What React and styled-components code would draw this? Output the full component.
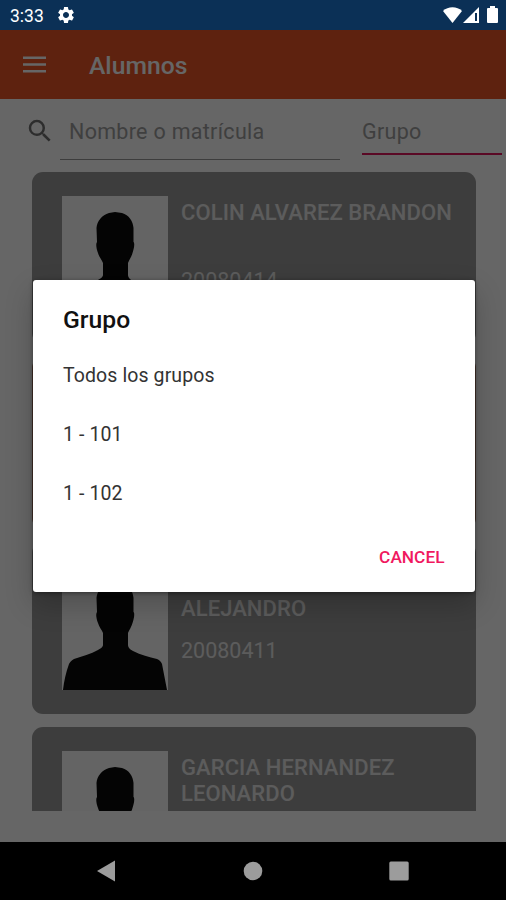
import styled, { createGlobalStyle } from "styled-components";
import { MdSettings, MdSearch } from "react-icons/md";

const GlobalStyle = createGlobalStyle`
    * {
        box-sizing: border-box;
    }

    body {
        margin: 0;
        font-family: 'Roboto', sans-serif;
    }
`;

const Phone = styled.div`
    position: relative;
    display: flex;
    flex-direction: column;
    width: 506px;
    height: 900px;
    overflow: hidden;
    background: #ffffff;
`;

const StatusBar = styled.div`
    display: flex;
    align-items: center;
    flex: none;
    height: 30px;
    padding: 0 7px 0 10px;
    background: #0b3056;
    color: #ffffff;
`;

const Clock = styled.span`
    width: 46px;
    padding-top: 2px;
    font-size: 17.5px;
    line-height: 20px;
`;

const StatusIcons = styled.div`
    display: flex;
    align-items: center;
    margin-left: auto;
`;

const AppBar = styled.header`
    display: flex;
    align-items: center;
    flex: none;
    height: 69px;
    padding: 0 20px;
    background: #eb5526;
    color: #ffffff;
`;

const MenuButton = styled.button`
    display: flex;
    width: 69px;
    padding: 0;
    border: 0;
    background: none;
    color: #ffffff;
`;

const Title = styled.h1`
    margin: 3px 0 0;
    font-size: 24.7px;
    font-weight: 500;
    line-height: 30px;
`;

const Filters = styled.div`
    display: flex;
    align-items: flex-start;
    flex: none;
    height: 73px;
    padding: 17px 4px 0 25px;
`;

const SearchIcon = styled.div`
    display: flex;
    width: 35px;
    color: #707070;
`;

const Field = styled.div`
    width: ${({ $width }) => $width}px;
    height: ${({ $height }) => $height}px;
    margin-right: ${({ $gap }) => $gap || 0}px;
    padding-left: ${({ $indent }) => $indent || 0}px;
    border-bottom: ${({ $line }) => $line};
    color: #9e9e9e;
    font-size: 21.5px;
    line-height: 32px;
    letter-spacing: 0.3px;
`;

const List = styled.div`
    display: flex;
    flex-direction: column;
    gap: 13px;
    flex: none;
    height: 639px;
    padding: 0 30px 0 32px;
    overflow: hidden;
`;

const Card = styled.div`
    display: flex;
    flex: none;
    height: 172px;
    padding: 24px 22px 24px 30px;
    border-radius: 11px;
    background: ${({ $color }) => $color || "#999999"};
`;

const Photo = styled.svg`
    flex: none;
    width: 106px;
    height: 124px;
    margin-right: 13px;
    background: #fafafa;
`;

const Student = styled.div`
    display: flex;
    flex-direction: column;
    gap: 17px;
    color: #e6e6e6;
`;

const Name = styled.div`
    height: 53px;
    padding-top: 4px;
    font-size: 22px;
    font-weight: 500;
    line-height: 26px;
    letter-spacing: 0.08px;
    white-space: pre-line;
`;

const Code = styled.div`
    font-size: 21.5px;
    line-height: 30px;
`;

const Spacer = styled.div`
    flex: 1;
`;

const NavBar = styled.nav`
    display: flex;
    align-items: center;
    flex: none;
    height: 58px;
    padding: 0 97px 0 96px;
    justify-content: space-between;
    background: #000000;
`;

/* dims everything between the status bar and the navigation bar */
const Scrim = styled.div`
    position: absolute;
    top: 30px;
    right: 0;
    bottom: 58px;
    left: 0;
    padding: 250px 31.5px 0 33px;
    background: rgba(0, 0, 0, 0.6);
`;

const Dialog = styled.div`
    display: flex;
    flex-direction: column;
    height: 312px;
    padding: 24px 30px 0;
    border-radius: 3px;
    background: #ffffff;
    box-shadow: 0 12px 28px rgba(0, 0, 0, 0.22), 0 1px 4px rgba(0, 0, 0, 0.4);
`;

const DialogTitle = styled.h2`
    margin: 0 0 11px;
    color: #111111;
    font-size: 24.7px;
    font-weight: 500;
    line-height: 32px;
`;

const Option = styled.div`
    height: 59px;
    color: #333333;
    font-size: 19.5px;
    line-height: 58px;
    letter-spacing: 0.1px;
`;

const Cancel = styled.button`
    align-self: flex-end;
    margin-top: 22px;
    padding: 0;
    border: 0;
    background: none;
    color: #f0195f;
    font-family: inherit;
    font-size: 17.3px;
    font-weight: 500;
    line-height: 22px;
`;

const students = [
    { name: "COLIN ALVAREZ BRANDON", code: "20080414" },
    { name: "", code: "", color: "#a57a64" },
    { name: "\nALEJANDRO", code: "20080411" },
    { name: "GARCIA HERNANDEZ\nLEONARDO", code: "" },
];

const groups = ["Todos los grupos", "1 - 101", "1 - 102"];

const Silhouette = () => (
    <Photo viewBox="0 0 106 124">
        <path
            fill="#0a0a0a"
            d="M47 17L53 16L60 17C67 19 71 25 71.500 32V46C73 47 72 53 70.500 57C69.500 61 67 64 66 67V79C66 82 69 84 71 85C79 89 87 91 95 93C98 94 99 96 100 98L105 124H1C2 115 4 106 7 98C8 96 9 95 12 93C20 90 29 88 36 84C38 83 41 81 41 79V67C40 64 37 61 36 57C34.500 53 33.500 48 35 46L34.500 32C35 25 40 19 47 17Z"
        />
    </Photo>
);

const App = () => {
    return (
        <Phone>
            <GlobalStyle />
            <StatusBar>
                <Clock>3:33</Clock>
                <MdSettings size="20" />
                <StatusIcons>
                    <svg width="56" height="20" viewBox="0 0 56 20" fill="#ffffff">
                        <path d="M0 6C5 1 14 1 19 6L9.500 18Z" />
                        <path fillRule="evenodd" d="M20 18L36 2V18ZM32 8V16H34V8Z" />
                        <path d="M44 4Q44 3 45 3H47V1H52V3H54Q55 3 55 4V17Q55 18 54 18H45Q44 18 44 17Z" />
                    </svg>
                </StatusIcons>
            </StatusBar>
            <AppBar>
                <MenuButton>
                    <svg width="30" height="24" viewBox="0 0 30 24" fill="#ffffff">
                        <path d="M3 3.500H26V6H3ZM3 10.200H26V12.700H3ZM3 17H26V19.500H3Z" />
                    </svg>
                </MenuButton>
                <Title>Alumnos</Title>
            </AppBar>
            <Filters>
                <SearchIcon>
                    <MdSearch size="30" />
                </SearchIcon>
                <Field $width={280} $height={44} $gap={22} $indent={9} $line="1px solid #989898">
                    Nombre o matrícula
                </Field>
                <Field $width={140} $height={39} $line="2px solid #e0185c">
                    Grupo
                </Field>
            </Filters>
            <List>
                {students.map((s, i) => (
                    <Card key={i} $color={s.color}>
                        <Silhouette />
                        <Student>
                            <Name>{s.name}</Name>
                            <Code>{s.code}</Code>
                        </Student>
                    </Card>
                ))}
            </List>
            <Spacer />
            <NavBar>
                <svg width="20" height="22" viewBox="0 0 20 22" fill="#9c9c9c">
                    <path d="M1 11L19 0.500V21.500Z" />
                </svg>
                <svg width="20" height="20" viewBox="0 0 20 20" fill="#9c9c9c">
                    <circle cx="10" cy="10" r="9.300" />
                </svg>
                <svg width="20" height="20" viewBox="0 0 20 20" fill="#9c9c9c">
                    <rect x="0.300" y="0.500" width="19.400" height="19" rx="1.500" />
                </svg>
            </NavBar>
            <Scrim>
                <Dialog>
                    <DialogTitle>Grupo</DialogTitle>
                    {groups.map((g) => (
                        <Option key={g}>{g}</Option>
                    ))}
                    <Cancel>CANCEL</Cancel>
                </Dialog>
            </Scrim>
        </Phone>
    );
};

export default App;
